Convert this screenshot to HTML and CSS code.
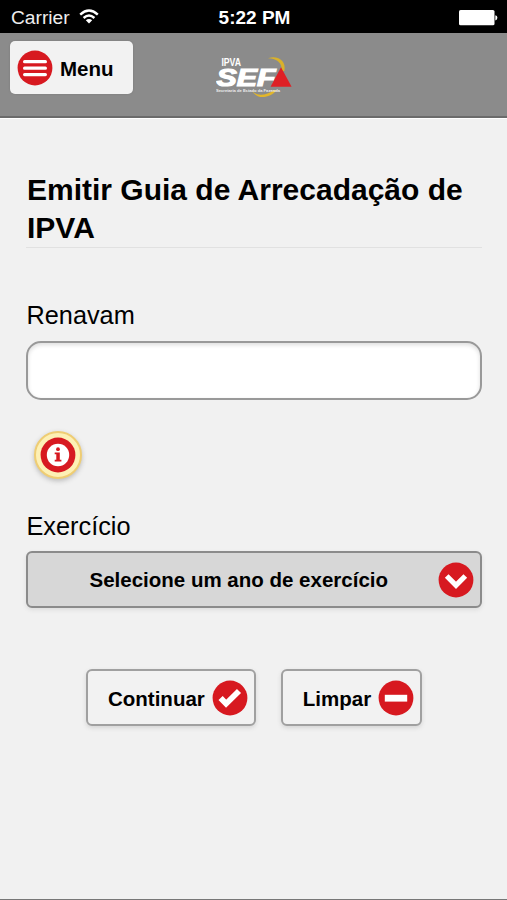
FILE: index.html
```html
<!DOCTYPE html>
<html lang="pt-BR">
<head>
<meta charset="utf-8">
<title>IPVA SEFA</title>
<link rel="stylesheet" href="styles.css">
</head>
<body>
<div class="status">
  <div class="carrier"><span>Carrier</span>
    <svg class="wifi" width="20" height="16" viewBox="0 0 20 16" fill="none" stroke="#fff" stroke-width="2.4"><path d="M1.2 5.6Q10-2.6 18.8 5.6M4.6 9Q10 4 15.4 9"/><path d="M6.8 11.2Q10 8.6 13.2 11.2L10 14.4Z" fill="#fff" stroke="none"/></svg>
  </div>
  <time class="clock">5:22 PM</time>
  <svg class="battery" width="39" height="16" viewBox="0 0 39 16" fill="#fff"><rect width="35.5" height="15.3" rx="1.6"/><path d="M36.3 5.2Q38.4 5.6 38.4 7.8T36.3 10.4Z"/></svg>
</div>
<header class="bar">
  <button class="menu"><svg width="36" height="36" viewBox="0 0 36 36"><circle cx="18" cy="18" r="17.4" fill="#d71920"/><path d="M7.6 11.7H28.4M7.6 18.2H28.4M7.6 24.6H28.4" stroke="#fff" stroke-width="3.2" stroke-linecap="round"/></svg><span>Menu</span></button>
  <svg class="logo" width="80" height="44" viewBox="0 0 80 44">
    <path d="M52 4.2C62 1 70.500 7 68.400 17L65.600 17C66.500 9 61 4.500 52 4.200Z" fill="#d9b12b"/>
    <path d="M36 36.500C41 43.500 51 41 58 36L61 36C54 44 41 46.500 36 36.500Z" fill="#e2b62a"/>
    <text class="logo-top" x="5.4" y="12.3" textLength="19.600" lengthAdjust="spacingAndGlyphs">IPVA</text>
    <text class="logo-name" x="0.500" y="31.600" textLength="59" lengthAdjust="spacingAndGlyphs">SEF</text>
    <path d="M65 13.300L75.600 32.800H54.600Z" fill="#df2025"/>
    <text class="logo-sub" x="0" y="38.200" textLength="64" lengthAdjust="spacingAndGlyphs">Secretaria de Estado da Fazenda</text>
  </svg>
</header>
<main class="content">
  <h1>Emitir Guia de Arrecadação de IPVA</h1>
  <label for="renavam">Renavam</label>
  <input id="renavam" class="field" type="text">
  <button class="info" aria-label="Info"><svg width="36" height="36" viewBox="0 0 36 36"><circle cx="18" cy="18" r="17.4" fill="#d71920"/><circle cx="18" cy="18" r="11.2" fill="#fff"/><circle cx="18" cy="12.2" r="1.9" fill="#d71920"/><path d="M14.7 15.4H19.8V22.7H21.4V24.6H14.7V22.7H16.3V17.3H14.7Z" fill="#d71920"/></svg></button>
  <label for="ano">Exercício</label>
  <button id="ano" class="select"><span>Selecione um ano de exercício</span><svg width="36" height="36" viewBox="0 0 36 36"><circle cx="18" cy="18" r="17.4" fill="#d71920"/><path d="M8.7 14L18 23.300L27.300 14" fill="none" stroke="#fff" stroke-width="5.200"/></svg></button>
  <div class="actions">
    <button class="action"><span>Continuar</span><svg width="36" height="36" viewBox="0 0 36 36"><circle cx="18" cy="18" r="17.4" fill="#d71920"/><path d="M8.600 17.900L14.100 23.700L27 11" fill="none" stroke="#fff" stroke-width="5.800"/></svg></button>
    <button class="action"><span>Limpar</span><svg width="36" height="36" viewBox="0 0 36 36"><circle cx="18" cy="18" r="17.4" fill="#d71920"/><rect x="6.8" y="14.8" width="22.4" height="6.8" fill="#fff"/></svg></button>
  </div>
</main>
</body>
</html>
```
FILE: styles.css
```css
* { box-sizing: border-box; }
body {
  margin: 0;
  min-height: 900px;
  background: #f1f1f1;
  color: #000;
  font-family: "Liberation Sans", Arial, sans-serif;
  border-bottom: 1px solid #777;
}
svg { display: block; flex: none; }
button { font: bold 20.5px "Liberation Sans", Arial, sans-serif; color: #000; margin: 0; }
.status {
  height: 33px;
  padding: 3px 9px 0 11px;
  background: #000;
  color: #fff;
  font-size: 19.2px;
  display: grid;
  grid-template-columns: 1fr auto 1fr;
  align-items: center;
}
.carrier { display: flex; align-items: center; gap: 9px; color: #eee; }
.wifi { margin-top: -3px; }
.clock { font-weight: bold; font-size: 19px; }
.battery { justify-self: end; }
.bar {
  height: 85px;
  padding: 8px 10px 0;
  background: #8b8b8b;
  border-bottom: 2px solid #6b6b6b;
  box-shadow: 0 1px 0 #fff;
  display: flex;
  align-items: flex-start;
}
.menu {
  width: 123px;
  height: 53px;
  padding: 0 0 0 7px;
  border: 0;
  border-radius: 5px;
  background: #f2f2f2;
  box-shadow: 0 0 2px #777;
  display: flex;
  align-items: center;
  gap: 7px;
}
.menu span { padding-top: 2px; }
.logo { margin: 13px 0 0 83px; }
.logo-top { font: bold 10.5px "Liberation Sans", sans-serif; fill: #fff; }
.logo-name { font: italic bold 24px "Liberation Sans", sans-serif; fill: #fff; stroke: #fff; stroke-width: 1.2; }
.logo-sub { font: bold 4.2px "Liberation Sans", sans-serif; fill: #eee; }
.content { padding: 53px 26px 0; display: flex; flex-direction: column; }
h1 {
  margin: 0 -1px 0 0;
  padding-left: 1px;
  height: 77px;
  font-size: 30px;
  line-height: 38px;
  border-bottom: 1px solid #e1e1e1;
}
label { font-size: 25.3px; line-height: 30px; padding-left: 0.5px; }
h1 + label { margin-top: 52px; }
.field {
  height: 59px;
  margin: 11px -1px 0 0;
  padding: 0 14px;
  font-size: 25.5px;
  border: 2px solid #999;
  border-radius: 15px;
  background: #fff;
  box-shadow: inset 0 2px 4px #ddd;
}
.info {
  width: 48px;
  height: 48px;
  margin: 31px 0 0 8px;
  padding: 0;
  border: 2px solid #efcd73;
  border-radius: 50%;
  background: #fdf0b5;
  box-shadow: 0 2px 5px #bbb;
  display: flex;
  align-items: center;
  justify-content: center;
}
.info + label { margin-top: 32px; }
.select {
  height: 57px;
  margin: 10px -1px 0 0;
  padding: 0 6px 0 61.5px;
  border: 2px solid #8b8b8b;
  border-radius: 6px;
  background: #d7d7d7;
  box-shadow: 0 2px 4px #ddd;
  display: flex;
  align-items: center;
  justify-content: space-between;
  white-space: nowrap;
}
.actions { display: flex; gap: 25px; margin: 61px 0 0 60px; }
.action {
  height: 57px;
  padding: 0 6px 0 20px;
  border: 2px solid #a0a0a0;
  border-radius: 6px;
  background: #f2f2f2;
  box-shadow: 0 2px 4px #d5d5d5;
  display: flex;
  align-items: center;
  gap: 7px;
}
.action span { padding-top: 2px; }
```
